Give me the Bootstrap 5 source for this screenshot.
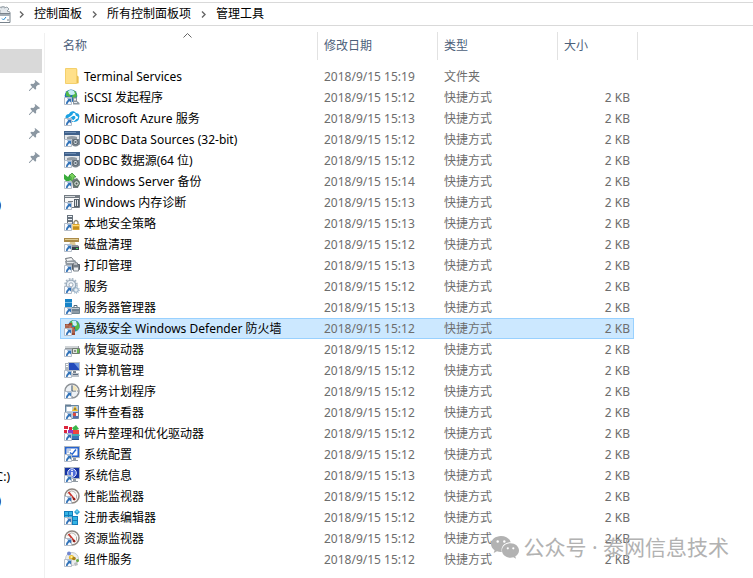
<!DOCTYPE html>
<html lang="zh-CN">
<head>
<meta charset="utf-8">
<meta name="viewport" content="width=device-width, initial-scale=1">
<title>管理工具</title>
<link href="https://cdn.jsdelivr.net/npm/bootstrap@5.3.0/dist/css/bootstrap.min.css" rel="stylesheet">
<script src="https://cdn.jsdelivr.net/npm/bootstrap@5.3.0/dist/js/bootstrap.bundle.min.js" defer></script>
<style>
  body { font: 12px/20px "Noto Sans", "Noto Sans CJK SC", sans-serif; color: #000; background: #fff; }
  .address { height: 24px; margin-top: 2px; border-top: 1px solid #d9d9d9; border-bottom: 1px solid #d9d9d9; }
  .address a { color: #000; }
  .address .chev { width: 5px; height: 7px; margin: 0 10px; }
  .address .home { width: 11px; height: 17px; }
  .address .home + .chev { margin-left: 8px; }
  .side { width: 45px; padding-top: 16px; margin-top: 7px; border-right: 1px solid #f0f0f0; }
  .side .current { width: 42px; height: 24px; background: #d9d9d9; }
  .side .pin { height: 24px; padding-right: 4px; }
  .side .drive { height: 24px; padding-right: 34px; line-height: 24px; }
  .side .clipped { padding-right: 43px; }
  .side .gap-a { height: 24px; }
  .side .gap-b { height: 248px; }
  .pane { padding: 6px 0 0 15px; }
  .files { width: 578px; table-layout: fixed; border-collapse: separate; border-spacing: 0; }
  .files th { height: 28px; padding: 0 6px; border-right: 1px solid #e2e2e2; font-weight: 400; color: #4c607a; position: relative; }
  .files th:first-child { padding-left: 3px; }
  .files .space td { height: 6px; padding: 0; border: 0; }
  .files td { height: 21px; padding: 0 6px; border: solid transparent; border-width: 1px 0; line-height: 19px; color: #6d6d6d; white-space: nowrap; }
  .files td:first-child { padding: 0 0 0 4px; color: #000; }
  .files td:nth-child(4) { padding-right: 4px; text-align: right; }
  .files .picked td:nth-child(-n+4) { background: #cce8ff; border-color: #99d1ff; }
  .files .picked td:first-child { box-shadow: inset 1px 0 #99d1ff; }
  .files .picked td:nth-child(4) { box-shadow: inset -1px 0 #99d1ff; }
  .files td svg { width: 16px; height: 16px; margin: 1px 4px 0 0; vertical-align: top; }
  .sort { position: absolute; top: 1px; left: 123px; width: 9px; height: 5px; }
  .watermark { right: 24px; bottom: 17px; font-size: 21px; line-height: 28px; color: #aaa; opacity: .9; }
  .watermark svg { width: 28px; height: 24px; }
</style>
</head>
<body class="position-relative min-vh-100 overflow-hidden d-flex flex-column">
<svg width="0" height="0" class="position-absolute" aria-hidden="true">
  <defs>
    <symbol id="cut" viewBox="0 0 16 16"><path d="M.5 8.500h7v7h-7z" fill="#fbfcfe" stroke="#b3bcc8"/><path d="M3 9.500h4v4l-1.300-1.300C4.500 12.800 3.700 13.700 3.600 15H2c0-2 .8-3.300 2.300-4.200z" fill="#3273b8"/></symbol>
    <symbol id="pin" viewBox="0 0 11 11"><path d="M6 0l5 4-1 1-1-.3-2 2 .2 2-1 1L4 7.600.6 11H0v-.7L3.200 7 1.300 4.800l1-1 2.100.2 1.900-2L5.600.8z" fill="#8b97a2"/></symbol>
    <symbol id="folder" viewBox="0 0 16 16"><path d="M1.500.5h11l1 1V8l1 1v6.500h-13z" fill="#ffe08a"/><path d="M13 7.500l1.500 1v6.500l-2 .5V9z" fill="#e8bd50"/><path d="M1.500.5h11v15h-11z" fill="none" stroke="#f4d06c"/></symbol>
    <symbol id="globe" viewBox="0 0 16 16"><circle cx="7" cy="6.800" r="6.300" fill="#2470b9"/><path d="M2 3l4-2 2 2-1 2-1 3-4-1zM9 1l3 2 1 4-3 3-2-2 1-3z" fill="#52b947"/><path d="M4 2q3-2 6 0l1 3q-4 2-6 0z" fill="#c9edf8"/><path d="M9 8.500h4V12l2.500 2v1.500H9z" fill="#8b969f"/><path d="M10 9.500h2v2h-2zM10 13h3v1h-3z" fill="#e8ecef"/></symbol>
    <symbol id="azure" viewBox="0 0 16 16"><path d="M3 11C0 7 2 4 5 4c1-3 5-4 7-1 3 0 4 3 3 5 0 3-3 4-6 4z" fill="#1ba1e2"/><path d="M5 8l5-3.500 3 3L9.500 11z" fill="none" stroke="#fff" stroke-width="1.300"/><circle cx="10" cy="4.500" r="1.400" fill="#fff"/><circle cx="12.700" cy="7.500" r="1.300" fill="#fff"/></symbol>
    <symbol id="odbc" viewBox="0 0 16 16"><path d="M.5 1.500h15v12H.5z" fill="#e7eaed" stroke="#8492a1"/><path d="M0 0h16v4H0z" fill="#40618b"/><path d="M1 1h11v1H1z" fill="#6e8db3"/><path d="M3 6q5-2 10 0v2H3z" fill="#939ca4"/><path d="M8 8h7v6q-3.500 3-7 0z" fill="#79848d"/><circle cx="11.500" cy="11" r="2.500" fill="#d9dfe3" stroke="#505d68"/><path d="M10.500 10h2v2h-2z" fill="#66737e"/></symbol>
    <symbol id="backup" viewBox="0 0 16 16"><path d="M0 1l4 3 2-3 1 6-4 2-3-3z" fill="#38ad3b"/><path d="M5 3l3-3 4 4h-2v5H7V4z" fill="#79d25b" stroke="#27822b" stroke-width=".7"/><path d="M8 7l5-2 3 4-2 6H9z" fill="#727a7e"/><circle cx="12.500" cy="10.500" r="2.800" fill="#cbd2cf" stroke="#42614a"/><circle cx="12.500" cy="10.500" r="1" fill="#4b5552"/></symbol>
    <symbol id="memory" viewBox="0 0 16 16"><path d="M.5 1.500h15v12H.5z" fill="#f8f8f8" stroke="#747b82"/><path d="M0 1h16v3H0z" fill="#747c83"/><path d="M1 2h10v1H1z" fill="#d6dadd"/><path d="M10 5h5v8h-5z" fill="#55606a"/><path d="M11 6h1v6h-1zm2 0h1v6h-1z" fill="#dfe3e6"/><path d="M4 7h5v1H4z" fill="#777f86"/></symbol>
    <symbol id="policy" viewBox="0 0 16 16"><path d="M3 0h6v9H3z" fill="#67727d"/><path d="M4 1h4v1H4zm0 3h4v1H4zm0 3h4v1H4z" fill="#eef2f5"/><path d="M10 9V7q2-3 4 0v2" fill="none" stroke="#8d8466" stroke-width="1.300"/><path d="M8.500 9h7v6h-7z" fill="#dba52b"/><path d="M9 10h6v1H9z" fill="#ffdc76"/><path d="M9 13h6" stroke="#a77a17"/></symbol>
    <symbol id="clean" viewBox="0 0 16 16"><path d="M0 2h15v4H0z" fill="#aa8a48"/><path d="M1 3h13v1H1z" fill="#dfcb91"/><path d="M6 6h5l1 4H5z" fill="#dccb9a"/><path d="M6 10h9v4H6z" fill="#39424a"/><path d="M7 9h7l1 2H6z" fill="#8b949c"/><path d="M12 12h2v1h-2z" fill="#43e459"/></symbol>
    <symbol id="print" viewBox="0 0 16 16"><path d="M1.500 1.500l6-1 3 4-7 2z" fill="#fafafa" stroke="#697077"/><path d="M1 4l10-1 2 3-2 3H2z" fill="#929aa1"/><path d="M3 5h8v1H3z" fill="#e4e7e9"/><path d="M8.500 7.500h7v5h-7z" fill="#747e87" stroke="#555f68"/><path d="M9.500 6h4v2h-4zm0 4h5v4h-5z" fill="#eceff1" stroke="#7c838a"/></symbol>
    <symbol id="gear" viewBox="0 0 16 16"><circle cx="7" cy="6.800" r="4.700" fill="#e8eff5" stroke="#99aabb" stroke-width="1.200"/><circle cx="7" cy="6.800" r="6" fill="none" stroke="#a2b2c1" stroke-width="1.500" stroke-dasharray="1.800 1.350"/><circle cx="7" cy="6.800" r="2" fill="#fff" stroke="#9baaba"/><circle cx="12" cy="12" r="2.300" fill="#e8eff5" stroke="#88a5be"/><circle cx="12" cy="12" r="3.300" fill="none" stroke="#88a5be" stroke-dasharray="1 1"/></symbol>
    <symbol id="server" viewBox="0 0 16 16"><path d="M1 0h7v3H1zm0 4h7v4H1z" fill="#1883c7"/><path d="M1 3h7v1H1z" fill="#79bce4"/><path d="M7.500 8.500h8v6h-8z" fill="#8d9ca8" stroke="#718491"/><path d="M10 8V6.500h3V8M8 11h7" fill="none" stroke="#54687a"/><path d="M8 9h7v1H8z" fill="#c1cbd3"/></symbol>
    <symbol id="fire" viewBox="0 0 16 16"><circle cx="10" cy="5.900" r="5.800" fill="#257ec4"/><path d="M6 2l3-2 2 3-3 3zm7-1l2 3 .5 4-3 3-2-4z" fill="#53bd49"/><path d="M8 1q2-1 4 0l1 4q-2 2-4 0z" fill="#c9eef8"/><path d="M1 4h4V3h3v4h3v8H1z" fill="#984932"/><path d="M1 6h7M1 8h9M5 10h6M5 12h6M3 4v2m3 0v2m2 0v2" stroke="#d09b86" stroke-width=".7"/></symbol>
    <symbol id="recovery" viewBox="0 0 16 16"><path d="M1 5h14v8H1z" fill="#939a9f"/><path d="M1 5h13v2H1z" fill="#d0d4d7"/><path d="M8.500 7.500h7v5h-7z" fill="#dce1dc" stroke="#707a72"/><path d="M13 8h2v4h-2z" fill="#65b650"/><path d="M10 9h2v2h-2z" fill="#899187"/></symbol>
    <symbol id="computer" viewBox="0 0 16 16"><path d="M1 1h5v10H1z" fill="#adb5bc"/><path d="M2 2h3v1H2zm0 2h3v1H2z" fill="#fff"/><path d="M4.500.5h11v8h-11z" fill="#224abb" stroke="#b6bec5"/><path d="M10 1h5v6z" fill="#6f99e1"/><path d="M9 9h3v2H9z" fill="#7c858e"/><path d="M8 11h7v4H8z" fill="#bbc2c9"/><path d="M9 12h5v1H9z" fill="#5b6b81"/></symbol>
    <symbol id="clock" viewBox="0 0 16 16"><circle cx="8" cy="8" r="7" fill="#edf1f5" stroke="#8d9297" stroke-width="1.500"/><path d="M8 3v5h4" fill="none" stroke="#506477" stroke-width="1.200"/><path d="M8 2v1m5 5h1m-6 5v1" stroke="#777"/><path d="M9 2.500a5.500 5.500 0 0 1 4.500 5H9z" fill="#f3e5ba"/></symbol>
    <symbol id="event" viewBox="0 0 16 16"><path d="M1.500 1.500h13v13h-13z" fill="#bacddd" stroke="#6786a2"/><path d="M3 3h5v4H3z" fill="#fff"/><path d="M2 0v3m2-3v3m2-3v3" stroke="#60768b"/><path d="M11 2l3 5H8z" fill="#f4bd24"/><path d="M11 4v2" stroke="#444"/><path d="M9 8h5v6H9z" fill="#526caa"/><circle cx="10.500" cy="10.500" r="1.700" fill="#df483b"/><path d="M12 9h2v3h-2z" fill="#edf1f6"/></symbol>
    <symbol id="defrag" viewBox="0 0 16 16"><path d="M0 1h4v3H0zm0 4h3v3H0zm5-3h3v3H5z" fill="#dc263d"/><path d="M8 3l4-3 3 4-5 2z" fill="#3bb64a"/><path d="M4 5h5v6H4z" fill="#8c3ac5"/><path d="M9 5h6v5H9z" fill="#ee463c"/><path d="M8 9h7v6H8z" fill="#3976b8"/><path d="M7 9h8l1 2H8z" fill="#45aab4"/><path d="M8 14h7v1H8z" fill="#22518a"/></symbol>
    <symbol id="config" viewBox="0 0 16 16"><path d="M.5.500h15v11H.5z" fill="#2763ce" stroke="#aeb7bf"/><path d="M2.500 2.500h11v7h-11z" fill="#fff"/><path d="M6 6.500l2 2 4-5" fill="none" stroke="#2364cc" stroke-width="1.400"/><path d="M3 4h4M3 6h2" stroke="#839dc8"/><path d="M9 12h3v2h2v1H8v-1h1z" fill="#939ca4"/></symbol>
    <symbol id="info" viewBox="0 0 16 16"><path d="M.5.500h15v11H.5z" fill="#1734a4" stroke="#aeb7bf"/><circle cx="8" cy="6" r="4.300" fill="#4e6dd8" stroke="#e9efff"/><path d="M8 3v1m0 1v4" stroke="#fff" stroke-width="1.600"/><path d="M9 12h3v2h2v1H8v-1h1z" fill="#939ca4"/></symbol>
    <symbol id="gauge" viewBox="0 0 16 16"><circle cx="8" cy="8" r="7" fill="#faf9f8" stroke="#8e8782" stroke-width="1.500"/><path d="M3.500 6q4-6 8.500-.5m.5 1v4" fill="none" stroke="#b5afaa"/><path d="M4.500 4l6.500 8" stroke="#c9362d" stroke-width="1.900"/><circle cx="10" cy="11" r="1.300" fill="#8f241f"/></symbol>
    <symbol id="registry" viewBox="0 0 16 16"><path d="M0 2h9v5h5v9H0z" fill="#147cba"/><path d="M1 3h3v3H1zm4 0h3v3H5zM1 7h3v3H1zm4 0h3v3H5zm4 1h4v3H9zm0 4h4v3H9z" fill="#35b4e4"/><path d="M13 0l3 3-3 3-3-3z" fill="#2c9fd3"/><path d="M13 1l1.500 1.500L13 4l-1.500-1.500z" fill="#6fd0ef"/></symbol>
    <symbol id="component" viewBox="0 0 16 16"><circle cx="8" cy="8" r="6.500" fill="#eceeef" stroke="#c3c8cb"/><circle cx="5" cy="2.500" r="2" fill="#7187cf"/><circle cx="7.500" cy="6.500" r="2.600" fill="#e9bd31"/><circle cx="10" cy="7.500" r="1.800" fill="#a78019"/><circle cx="7.500" cy="6" r="1.100" fill="#fff0a0"/><circle cx="13.500" cy="9.500" r="1.500" fill="#65ab40"/><path d="M10 12l3-1 1 3-3 1z" fill="#babdbf"/></symbol>
  </defs>
</svg>

<nav class="address d-flex align-items-center flex-shrink-0" aria-label="地址">
  <svg class="home" viewBox="0 0 11 17"><path d="M0 7V4l-1-1 1-2 2 1V0h2v2l3-1 2 2-2 2 3 1v2" fill="#e3e8ec" stroke="#99a2a9"/><path d="M-2 7.500h12v9H-2z" fill="#fff" stroke="#79838c"/><path d="M-2 8h12v2H-2z" fill="#a3adb5"/><path d="M2 12.500l1.500 1.500L6 11" fill="none" stroke="#278dd2"/><path d="M7 14h2" stroke="#79838c"/></svg>
  <svg class="chev" viewBox="0 0 5 7"><path d="M1 .5l3 3-3 3" fill="none" stroke="#666" stroke-width="1.400"/></svg>
  <a href="#" class="text-decoration-none">控制面板</a>
  <svg class="chev" viewBox="0 0 5 7"><path d="M1 .5l3 3-3 3" fill="none" stroke="#666" stroke-width="1.400"/></svg>
  <a href="#" class="text-decoration-none">所有控制面板项</a>
  <svg class="chev" viewBox="0 0 5 7"><path d="M1 .5l3 3-3 3" fill="none" stroke="#666" stroke-width="1.400"/></svg>
  <a href="#" class="text-decoration-none" aria-current="page">管理工具</a>
</nav>

<main class="d-flex flex-grow-1">
  <aside class="side flex-shrink-0">
    <div class="current"></div>
    <div class="pin d-flex align-items-center justify-content-end"><svg width="11" height="11"><use href="#pin"/></svg></div>
    <div class="pin d-flex align-items-center justify-content-end"><svg width="11" height="11"><use href="#pin"/></svg></div>
    <div class="pin d-flex align-items-center justify-content-end"><svg width="11" height="11"><use href="#pin"/></svg></div>
    <div class="pin d-flex align-items-center justify-content-end"><svg width="11" height="11"><use href="#pin"/></svg></div>
    <div class="gap-a"></div>
    <div class="drive clipped d-flex justify-content-end">)</div>
    <div class="gap-b"></div>
    <div class="drive d-flex justify-content-end">C:)</div>
    <div class="drive clipped d-flex justify-content-end">)</div>
  </aside>
  <div class="pane">
  <table class="files">
    <colgroup><col style="width:258px"><col style="width:120px"><col style="width:120px"><col style="width:76px"><col style="width:4px"></colgroup>
    <thead>
      <tr><th>名称<svg class="sort" viewBox="0 0 9 5"><path d="M.5 4.500l4-4 4 4" fill="none" stroke="#666"/></svg></th><th>修改日期</th><th>类型</th><th colspan="2">大小</th></tr>
    </thead>
    <tbody>
      <tr class="space"><td colspan="5"></td></tr>
      <tr><td><svg><use href="#folder"/></svg>Terminal Services</td><td>2018/9/15 15:19</td><td>文件夹</td><td></td><td></td></tr>
      <tr><td><svg><use href="#globe"/><use href="#cut"/></svg>iSCSI 发起程序</td><td>2018/9/15 15:12</td><td>快捷方式</td><td>2 KB</td><td></td></tr>
      <tr><td><svg><use href="#azure"/><use href="#cut"/></svg>Microsoft Azure 服务</td><td>2018/9/15 15:13</td><td>快捷方式</td><td>2 KB</td><td></td></tr>
      <tr><td><svg><use href="#odbc"/><use href="#cut"/></svg>ODBC Data Sources (32-bit)</td><td>2018/9/15 15:12</td><td>快捷方式</td><td>2 KB</td><td></td></tr>
      <tr><td><svg><use href="#odbc"/><use href="#cut"/></svg>ODBC 数据源(64 位)</td><td>2018/9/15 15:12</td><td>快捷方式</td><td>2 KB</td><td></td></tr>
      <tr><td><svg><use href="#backup"/><use href="#cut"/></svg>Windows Server 备份</td><td>2018/9/15 15:14</td><td>快捷方式</td><td>2 KB</td><td></td></tr>
      <tr><td><svg><use href="#memory"/><use href="#cut"/></svg>Windows 内存诊断</td><td>2018/9/15 15:13</td><td>快捷方式</td><td>2 KB</td><td></td></tr>
      <tr><td><svg><use href="#policy"/><use href="#cut"/></svg>本地安全策略</td><td>2018/9/15 15:13</td><td>快捷方式</td><td>2 KB</td><td></td></tr>
      <tr><td><svg><use href="#clean"/><use href="#cut"/></svg>磁盘清理</td><td>2018/9/15 15:12</td><td>快捷方式</td><td>2 KB</td><td></td></tr>
      <tr><td><svg><use href="#print"/><use href="#cut"/></svg>打印管理</td><td>2018/9/15 15:13</td><td>快捷方式</td><td>2 KB</td><td></td></tr>
      <tr><td><svg><use href="#gear"/><use href="#cut"/></svg>服务</td><td>2018/9/15 15:12</td><td>快捷方式</td><td>2 KB</td><td></td></tr>
      <tr><td><svg><use href="#server"/><use href="#cut"/></svg>服务器管理器</td><td>2018/9/15 15:13</td><td>快捷方式</td><td>2 KB</td><td></td></tr>
      <tr class="picked" aria-selected="true"><td><svg><use href="#fire"/><use href="#cut"/></svg>高级安全 Windows Defender 防火墙</td><td>2018/9/15 15:12</td><td>快捷方式</td><td>2 KB</td><td></td></tr>
      <tr><td><svg><use href="#recovery"/><use href="#cut"/></svg>恢复驱动器</td><td>2018/9/15 15:12</td><td>快捷方式</td><td>2 KB</td><td></td></tr>
      <tr><td><svg><use href="#computer"/><use href="#cut"/></svg>计算机管理</td><td>2018/9/15 15:12</td><td>快捷方式</td><td>2 KB</td><td></td></tr>
      <tr><td><svg><use href="#clock"/><use href="#cut"/></svg>任务计划程序</td><td>2018/9/15 15:12</td><td>快捷方式</td><td>2 KB</td><td></td></tr>
      <tr><td><svg><use href="#event"/><use href="#cut"/></svg>事件查看器</td><td>2018/9/15 15:12</td><td>快捷方式</td><td>2 KB</td><td></td></tr>
      <tr><td><svg><use href="#defrag"/><use href="#cut"/></svg>碎片整理和优化驱动器</td><td>2018/9/15 15:12</td><td>快捷方式</td><td>2 KB</td><td></td></tr>
      <tr><td><svg><use href="#config"/><use href="#cut"/></svg>系统配置</td><td>2018/9/15 15:12</td><td>快捷方式</td><td>2 KB</td><td></td></tr>
      <tr><td><svg><use href="#info"/><use href="#cut"/></svg>系统信息</td><td>2018/9/15 15:13</td><td>快捷方式</td><td>2 KB</td><td></td></tr>
      <tr><td><svg><use href="#gauge"/><use href="#cut"/></svg>性能监视器</td><td>2018/9/15 15:12</td><td>快捷方式</td><td>2 KB</td><td></td></tr>
      <tr><td><svg><use href="#registry"/><use href="#cut"/></svg>注册表编辑器</td><td>2018/9/15 15:12</td><td>快捷方式</td><td>2 KB</td><td></td></tr>
      <tr><td><svg><use href="#gauge"/><use href="#cut"/></svg>资源监视器</td><td>2018/9/15 15:12</td><td>快捷方式</td><td>2 KB</td><td></td></tr>
      <tr><td><svg><use href="#component"/><use href="#cut"/></svg>组件服务</td><td>2018/9/15 15:12</td><td>快捷方式</td><td>2 KB</td><td></td></tr>
    </tbody>
  </table>
  </div>
</main>

<div class="watermark position-absolute d-flex align-items-center gap-1 pe-none">
  <svg viewBox="0 0 28 24"><path d="M10 1C4.500 1 0 4.600 0 9c0 2.500 1.400 4.700 3.600 6.200L2.700 18l3.300-1.700c1.200.4 2.600.6 4 .6h.8C9.500 11.500 13.500 7.500 19.700 7.300 18.800 3.600 14.800 1 10 1z" fill="currentColor"/><path d="M28 15.500c0-4-3.800-7.200-8.500-7.200S11 11.500 11 15.500s3.800 7.200 8.500 7.200c1 0 2-.1 2.900-.4L25 23.800l-.7-2.500c2.300-1.300 3.700-3.400 3.700-5.800z" fill="currentColor"/><g fill="#fff"><circle cx="6.700" cy="6.500" r="1.200"/><circle cx="13.300" cy="6.500" r="1.200"/><circle cx="16.800" cy="13.300" r="1.100"/><circle cx="22.300" cy="13.300" r="1.100"/></g></svg>
  <span>公众号 · 泰网信息技术</span>
</div>
</body>
</html>
